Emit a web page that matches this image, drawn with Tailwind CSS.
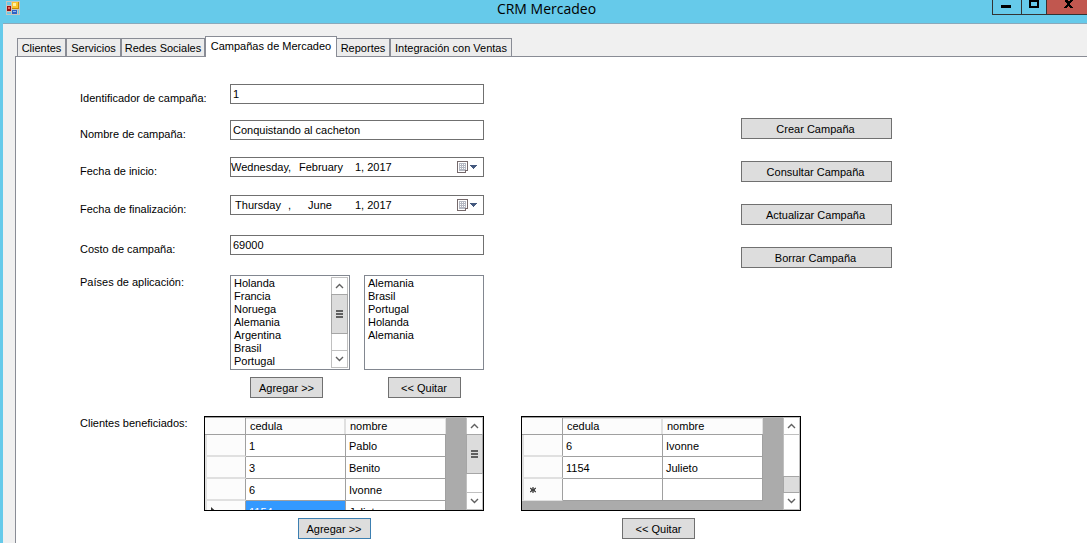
<!DOCTYPE html>
<html lang="es">
<head>
<meta charset="utf-8">
<title>CRM Mercadeo</title>
<script src="https://cdn.jsdelivr.net/npm/@tailwindcss/browser@4"></script>
</head>
<body class="flex min-h-screen flex-col overflow-hidden bg-[#66caea] font-['Liberation_Sans',Arial,sans-serif] text-[11px] leading-[14px] text-black">
<header class="grid h-[23px] grid-cols-[1fr_auto_1fr] items-start pl-[6px]">
  <svg class="mt-px h-[14px] w-[14px]" viewBox="0 0 14 14" shape-rendering="crispEdges" aria-hidden="true">
    <path d="M0 0h14v14H0z" fill="#c8c4be"/>
    <path d="M1 1h4v3H1zM1 11h4v2H1zM12 9h1v4h-1z" fill="#66caea"/>
    <path d="M1 5h4v5H1z" fill="#9c1010"/><path d="M2 6h2v2H2z" fill="#e86a5a"/>
    <path d="M6 1h7v7H6z" fill="#c98a00"/><path d="M6 1h6v6H6z" fill="#fbc52c"/><path d="M7 2h3v3H7z" fill="#fff0a0"/>
    <path d="M6 9h5v4H6z" fill="#2f62c4"/><path d="M7 10h3v1H7z" fill="#8db8f4"/>
  </svg>
  <h1 class="font-['Open_Sans',sans-serif] text-[14px] leading-[18px]">CRM Mercadeo</h1>
  <div class="flex justify-end">
    <button aria-label="Minimizar" class="flex h-[15px] w-[29px] justify-center border-b border-l border-[#333]"><svg class="h-[14px] w-[28px]" viewBox="0 0 28 14" shape-rendering="crispEdges"><path d="M8 5h10v3H8z"/></svg></button>
    <button aria-label="Maximizar" class="flex h-[15px] w-[26px] border-x border-b border-[#333]"><svg class="h-[14px] w-[24px]" viewBox="0 0 24 14" shape-rendering="crispEdges"><path fill-rule="evenodd" d="M7 0h10v8H7zM9 2v4h6V2z"/></svg></button>
    <button aria-label="Cerrar" class="flex h-[15px] w-[40px] border-b border-[#333] bg-[#c1574f]"><svg class="h-[14px] w-[40px]" viewBox="0 0 40 14" shape-rendering="crispEdges"><path d="M18 0h3v1h2V0h3v1h-1v1h-1v1h-1v2h1v1h1v1h1v1h-3V7h-1V6h-1v1h-1v1h-3V7h1V6h1V5h1V3h-1V2h-1V1h-1z"/></svg></button>
  </div>
</header>

<div class="ml-[3px] flex grow flex-col border-t border-[#8aa9bb] bg-[#f0f0f0] pt-3 pl-3">
  <nav role="tablist" class="flex h-5 items-end pl-[2px]">
    <button role="tab" class="h-[18px] w-[49px] border border-b-0 border-[#898c95] bg-[#ececec] whitespace-nowrap">Clientes</button>
    <button role="tab" class="h-[18px] w-[55px] border border-b-0 border-[#898c95] bg-[#ececec] whitespace-nowrap">Servicios</button>
    <button role="tab" class="h-[18px] w-[84px] border border-b-0 border-[#898c95] bg-[#ececec] whitespace-nowrap">Redes Sociales</button>
    <button role="tab" aria-selected="true" class="z-10 -mb-px h-[21px] w-[132px] border border-b-0 border-[#898c95] bg-white pb-[2px] whitespace-nowrap">Campañas de Mercadeo</button>
    <button role="tab" class="h-[18px] w-[53px] border border-b-0 border-l-0 border-[#898c95] bg-[#ececec] whitespace-nowrap">Reportes</button>
    <button role="tab" class="h-[18px] w-[122px] border border-b-0 border-[#898c95] bg-[#ececec] whitespace-nowrap">Integración con Ventas</button>
  </nav>

  <main class="grow border-t border-l border-[#898c95] bg-white pl-16">
    <div class="flex gap-[257px] pt-[27px]">
      <form class="grid grid-cols-[150px_254px] items-start">
        <label for="ident" class="pt-[7px]">Identificador de campaña:</label>
        <input id="ident" value="1" class="mb-4 h-5 border border-[#707070] px-[2px]">

        <label for="nombre" class="pt-[7px]">Nombre de campaña:</label>
        <input id="nombre" value="Conquistando al cacheton" class="mb-[17px] h-5 border border-[#707070] px-[2px]">

        <label for="inicio" class="pt-[7px]">Fecha de inicio:</label>
        <button type="button" id="inicio" class="mb-[18px] flex h-5 items-center border border-[#707070] pr-[5px] text-left">
          <span class="w-[60px] text-center whitespace-nowrap">Wednesday,</span><span class="ml-2 w-[42px] text-center">February</span><span class="ml-[14px] grow">1, 2017</span>
          <svg class="h-3 w-[21px]" viewBox="0 0 21 12" shape-rendering="crispEdges" aria-hidden="true"><path d="M0 0h11v10h-2v2H0z" fill="#75696b"/><path d="M1 1h9v8H8v2H1z" fill="#fff"/><path d="M2 2h7v7H8v1H2z" fill="#b4b8c2"/><path d="M3 3h1v1H3zM5 3h1v1H5zM7 3h1v1H7zM3 5h1v1H3zM5 5h1v1H5zM7 5h1v1H7zM3 7h1v1H3zM5 7h1v1H5zM7 7h1v1H7z" fill="#fff"/><path d="M13 4h7v1h-1v1h-1v1h-1v1h-1V7h-1V6h-1V5h-1z" fill="#44597e"/></svg>
        </button>

        <label for="fin" class="pt-[7px]">Fecha de finalización:</label>
        <button type="button" id="fin" class="mb-5 flex h-5 items-center border border-[#707070] pr-[5px] text-left">
          <span class="flex w-[60px] justify-end gap-[7px]"><span>Thursday</span><span>,</span></span><span class="ml-2 w-[42px] text-center">June</span><span class="ml-[14px] grow">1, 2017</span>
          <svg class="h-3 w-[21px]" viewBox="0 0 21 12" shape-rendering="crispEdges" aria-hidden="true"><path d="M0 0h11v10h-2v2H0z" fill="#75696b"/><path d="M1 1h9v8H8v2H1z" fill="#fff"/><path d="M2 2h7v7H8v1H2z" fill="#b4b8c2"/><path d="M3 3h1v1H3zM5 3h1v1H5zM7 3h1v1H7zM3 5h1v1H3zM5 5h1v1H5zM7 5h1v1H7zM3 7h1v1H3zM5 7h1v1H5zM7 7h1v1H7z" fill="#fff"/><path d="M13 4h7v1h-1v1h-1v1h-1v1h-1V7h-1V6h-1V5h-1z" fill="#44597e"/></svg>
        </button>

        <label for="costo" class="pt-[7px]">Costo de campaña:</label>
        <input id="costo" value="69000" class="mb-5 h-5 border border-[#707070] px-[2px]">

        <label for="paises">Países de aplicación:</label>
        <div class="flex gap-[14px]">
          <div class="flex flex-col items-center gap-[7px]">
            <div class="flex h-[95px] w-[120px] border border-[#828790] p-px">
              <select id="paises" multiple size="7" class="h-[91px] grow overflow-hidden">
                <option class="h-[13px] min-h-0 px-[2px] py-0 leading-[15px]">Holanda</option>
                <option class="h-[13px] min-h-0 px-[2px] py-0 leading-[15px]">Francia</option>
                <option class="h-[13px] min-h-0 px-[2px] py-0 leading-[15px]">Noruega</option>
                <option class="h-[13px] min-h-0 px-[2px] py-0 leading-[15px]">Alemania</option>
                <option class="h-[13px] min-h-0 px-[2px] py-0 leading-[15px]">Argentina</option>
                <option class="h-[13px] min-h-0 px-[2px] py-0 leading-[15px]">Brasil</option>
                <option class="h-[13px] min-h-0 px-[2px] py-0 leading-[15px]">Portugal</option>
              </select>
              <div class="flex w-[17px] shrink-0 flex-col border border-[#c0c0c0]" aria-hidden="true">
                <svg class="h-4 w-[15px]" viewBox="0 0 15 16"><path d="M4 10l3.500-3.500L11 10" fill="none" stroke="#606060" stroke-width="1.400"/></svg>
                <div class="-mx-px flex h-10 flex-col items-center justify-center gap-px border border-[#a6a6a6] bg-[#dcdcdc]"><i class="h-[2px] w-[7px] bg-[#606060]"></i><i class="h-[2px] w-[7px] bg-[#606060]"></i><i class="h-[2px] w-[7px] bg-[#606060]"></i></div>
                <div class="grow border-b border-[#c0c0c0]"></div>
                <svg class="h-4 w-[15px]" viewBox="0 0 15 16"><path d="M4 6l3.500 3.500L11 6" fill="none" stroke="#606060" stroke-width="1.400"/></svg>
              </div>
            </div>
            <button type="button" class="ml-[-7px] h-[21px] w-[73px] border border-[#707070] bg-[#ddd]">Agregar &gt;&gt;</button>
          </div>
          <div class="flex flex-col items-center gap-[7px]">
            <div class="flex h-[95px] w-[120px] border border-[#828790] p-px">
              <select aria-label="Países seleccionados" multiple size="7" class="h-[91px] grow overflow-hidden">
                <option class="h-[13px] min-h-0 px-[2px] py-0 leading-[15px]">Alemania</option>
                <option class="h-[13px] min-h-0 px-[2px] py-0 leading-[15px]">Brasil</option>
                <option class="h-[13px] min-h-0 px-[2px] py-0 leading-[15px]">Portugal</option>
                <option class="h-[13px] min-h-0 px-[2px] py-0 leading-[15px]">Holanda</option>
                <option class="h-[13px] min-h-0 px-[2px] py-0 leading-[15px]">Alemania</option>
              </select>
            </div>
            <button type="button" class="h-[21px] w-[73px] border border-[#707070] bg-[#ddd]">&lt;&lt; Quitar</button>
          </div>
        </div>
      </form>

      <div class="flex flex-col gap-[22px] pt-[34px]">
        <button class="h-[21px] w-[151px] border border-[#707070] bg-[#ddd] pr-[2px]">Crear Campaña</button>
        <button class="h-[21px] w-[151px] border border-[#707070] bg-[#ddd] pr-[2px]">Consultar Campaña</button>
        <button class="h-[21px] w-[151px] border border-[#707070] bg-[#ddd] pr-[2px]">Actualizar Campaña</button>
        <button class="h-[21px] w-[151px] border border-[#707070] bg-[#ddd] pr-[2px]">Borrar Campaña</button>
      </div>
    </div>

    <section class="flex items-start pt-[18px]">
      <h2 id="clientes" class="w-[124px]">Clientes beneficiados:</h2>
      <div class="mr-[37px] flex flex-col items-center gap-[7px]">
        <div class="flex h-[95px] w-[280px] items-start overflow-hidden border border-black bg-[#ababab]">
          <table aria-labelledby="clientes" class="w-[241px] table-fixed border-separate border-spacing-0 border-t border-[#a0a0a0] bg-white text-left">
            <colgroup><col class="w-[41px]"><col class="w-[100px]"><col class="w-[100px]"></colgroup>
            <thead><tr class="h-[17px]">
              <th class="border-r border-b border-[#a0a0a0] bg-[#fcfcfc] p-0"></th>
              <th class="border-b border-[#a0a0a0] bg-[#fcfcfc] p-0 font-normal"><div class="h-4 border-t border-r-2 border-[#e0e0e0] pl-1 leading-[15px]">cedula</div></th>
              <th class="border-b border-[#a0a0a0] bg-[#fcfcfc] p-0 font-normal"><div class="h-4 border-t border-r border-[#e0e0e0] pl-1 leading-[15px]">nombre</div></th>
            </tr></thead>
            <tbody>
              <tr class="h-[22px]"><td class="border-r border-b-2 border-l-2 border-r-[#a0a0a0] border-b-[#e0e0e0] border-l-[#e0e0e0] bg-[#fcfcfc] p-0"></td><td class="border-r border-b border-[#a0a0a0] py-0 px-[3px]">1</td><td class="border-r border-b border-[#a0a0a0] py-0 px-[3px]">Pablo</td></tr>
              <tr class="h-[22px]"><td class="border-r border-b-2 border-l-2 border-r-[#a0a0a0] border-b-[#e0e0e0] border-l-[#e0e0e0] bg-[#fcfcfc] p-0"></td><td class="border-r border-b border-[#a0a0a0] py-0 px-[3px]">3</td><td class="border-r border-b border-[#a0a0a0] py-0 px-[3px]">Benito</td></tr>
              <tr class="h-[22px]"><td class="border-r border-b-2 border-l-2 border-r-[#a0a0a0] border-b-[#e0e0e0] border-l-[#e0e0e0] bg-[#fcfcfc] p-0"></td><td class="border-r border-b border-[#a0a0a0] py-0 px-[3px]">6</td><td class="border-r border-b border-[#a0a0a0] py-0 px-[3px]">Ivonne</td></tr>
              <tr class="h-[22px]"><td class="border-r border-b-2 border-l-2 border-r-[#a0a0a0] border-b-[#e0e0e0] border-l-[#e0e0e0] bg-[#fcfcfc] p-0 pl-1"><svg class="h-[9px] w-[5px]" viewBox="0 0 5 9" aria-label="Fila actual"><path d="M0 0l5 4.500L0 9z" fill="#333"/></svg></td><td class="border-r border-b border-[#a0a0a0] bg-[#3399ff] py-0 px-[3px] text-white">1154</td><td class="border-r border-b border-[#a0a0a0] py-0 px-[3px]">Julieto</td></tr>
            </tbody>
          </table>
          <div class="ml-auto flex h-[93px] w-[17px] shrink-0 flex-col border border-[#c0c0c0] bg-white" aria-hidden="true">
            <svg class="h-4 w-[15px]" viewBox="0 0 15 16"><path d="M4 10l3.500-3.500L11 10" fill="none" stroke="#606060" stroke-width="1.400"/></svg>
            <div class="-mx-px flex h-10 flex-col items-center justify-center gap-px border border-[#a6a6a6] bg-[#dcdcdc]"><i class="h-[2px] w-[7px] bg-[#606060]"></i><i class="h-[2px] w-[7px] bg-[#606060]"></i><i class="h-[2px] w-[7px] bg-[#606060]"></i></div>
            <div class="grow border-b border-[#c0c0c0]"></div>
            <svg class="h-4 w-[15px]" viewBox="0 0 15 16"><path d="M4 6l3.500 3.500L11 6" fill="none" stroke="#606060" stroke-width="1.400"/></svg>
          </div>
        </div>
        <button class="ml-[-20px] h-[21px] w-[73px] border border-[#3c7fb1] bg-[#ddd]">Agregar &gt;&gt;</button>
      </div>

      <div class="flex flex-col items-center gap-[7px]">
        <div class="flex h-[95px] w-[280px] items-start overflow-hidden border border-black bg-[#ababab]">
          <table aria-label="Clientes seleccionados" class="w-[241px] table-fixed border-separate border-spacing-0 border-t border-[#a0a0a0] bg-white text-left">
            <colgroup><col class="w-[41px]"><col class="w-[100px]"><col class="w-[100px]"></colgroup>
            <thead><tr class="h-[17px]">
              <th class="border-r border-b border-[#a0a0a0] bg-[#fcfcfc] p-0"></th>
              <th class="border-b border-[#a0a0a0] bg-[#fcfcfc] p-0 font-normal"><div class="h-4 border-t border-r-2 border-[#e0e0e0] pl-1 leading-[15px]">cedula</div></th>
              <th class="border-b border-[#a0a0a0] bg-[#fcfcfc] p-0 font-normal"><div class="h-4 border-t border-r border-[#e0e0e0] pl-1 leading-[15px]">nombre</div></th>
            </tr></thead>
            <tbody>
              <tr class="h-[22px]"><td class="border-r border-b-2 border-l-2 border-r-[#a0a0a0] border-b-[#e0e0e0] border-l-[#e0e0e0] bg-[#fcfcfc] p-0"></td><td class="border-r border-b border-[#a0a0a0] py-0 px-[3px]">6</td><td class="border-r border-b border-[#a0a0a0] py-0 px-[3px]">Ivonne</td></tr>
              <tr class="h-[22px]"><td class="border-r border-b-2 border-l-2 border-r-[#a0a0a0] border-b-[#e0e0e0] border-l-[#e0e0e0] bg-[#fcfcfc] p-0"></td><td class="border-r border-b border-[#a0a0a0] py-0 px-[3px]">1154</td><td class="border-r border-b border-[#a0a0a0] py-0 px-[3px]">Julieto</td></tr>
              <tr class="h-[22px]"><td class="border-r border-b border-l-2 border-r-[#a0a0a0] border-b-[#e0e0e0] border-l-[#e0e0e0] bg-[#fcfcfc] p-0 pl-[6px]"><svg class="h-[6px] w-[6px]" viewBox="0 0 6 6" aria-label="Fila nueva"><path d="M3 0v6M0 1l6 4M0 5l6-4M1 3h4" stroke="#444" stroke-width="1.300"/></svg></td><td class="border-r border-b border-[#a0a0a0] p-0"></td><td class="border-r border-b border-[#a0a0a0] p-0"></td></tr>
            </tbody>
          </table>
          <div class="ml-auto flex h-[93px] w-[17px] shrink-0 flex-col border border-[#c0c0c0] bg-white" aria-hidden="true">
            <svg class="h-4 w-[15px]" viewBox="0 0 15 16"><path d="M4 10l3.500-3.500L11 10" fill="none" stroke="#606060" stroke-width="1.400"/></svg>
            <div class="grow border-t border-[#c0c0c0]"></div>
            <div class="-mx-px h-[17px] border border-[#a6a6a6] bg-[#dcdcdc]"></div>
            <svg class="h-4 w-[15px]" viewBox="0 0 15 16"><path d="M4 6l3.500 3.500L11 6" fill="none" stroke="#606060" stroke-width="1.400"/></svg>
          </div>
        </div>
        <button class="ml-[-5px] h-[21px] w-[73px] border border-[#707070] bg-[#ddd]">&lt;&lt; Quitar</button>
      </div>
    </section>
  </main>
</div>
</body>
</html>
